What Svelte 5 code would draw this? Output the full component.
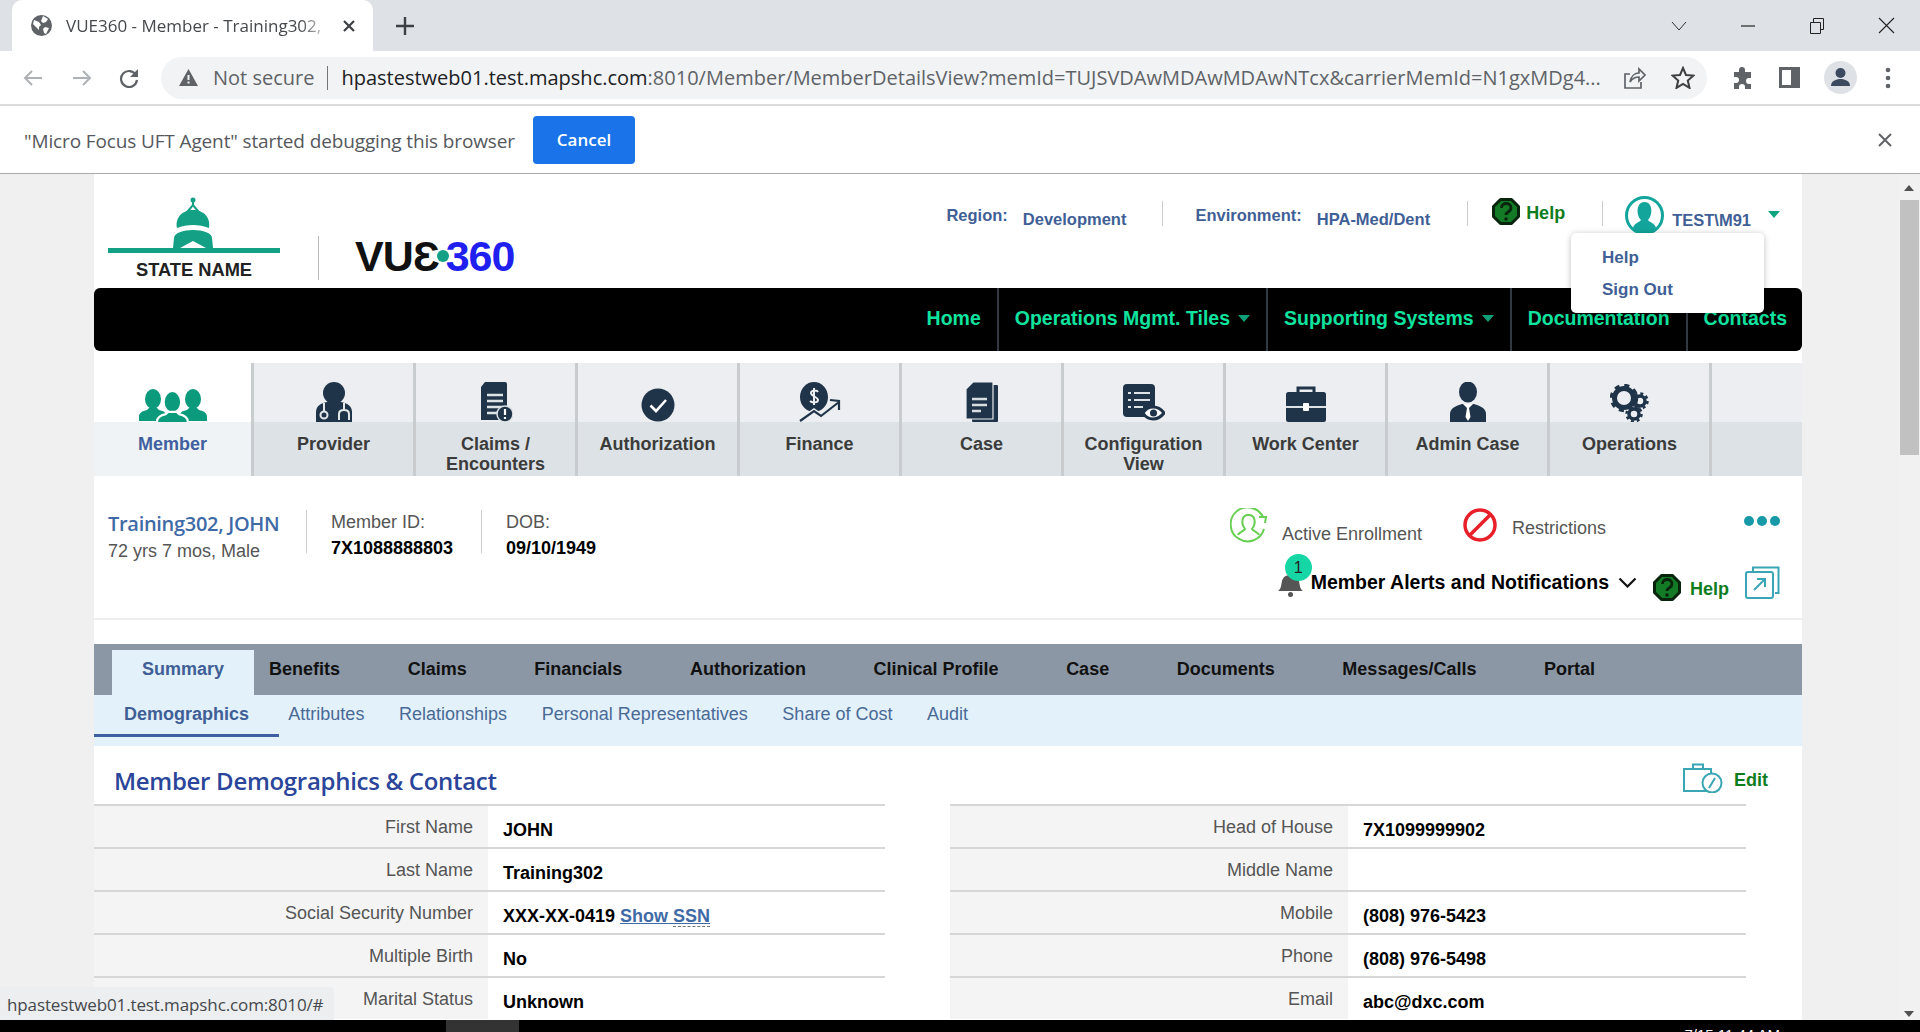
<script>
  const dark = "#1f3449";
  const bust = (x, y, s, c) =>
    `<g transform="translate(${x} ${y}) scale(${s})" fill="${c}"><ellipse cx="14" cy="10" rx="8" ry="10"/><path d="M0 32v-4c0-4 3-6 8-7l2-2h8l2 2c5 1 8 3 8 7v4z"/></g>`;

  const tiles = [
    {
      label: ["Member"],
      active: true,
      icon: `<svg width="68" height="33" viewBox="0 0 68 33">${bust(0, 0, 1, "#0b9a7c")}${bust(40, 0, 1, "#0b9a7c")}<g stroke="#fff" stroke-width="2">${bust(18, 2, 1.1, "#0b9a7c")}</g></svg>`,
    },
    {
      label: ["Provider"],
      icon: `<svg width="38" height="40" viewBox="0 0 38 40"><circle cx="19" cy="11" r="11" fill="${dark}"/><path d="M1 40V30c0-6 5-9 11-10h14c6 1 11 4 11 10v10z" fill="${dark}"/><path d="M9 21v9M29 21v7M24 38v-6c0-3 2-4 5-4s5 1 5 4v6" fill="none" stroke="#e4e8eb" stroke-width="2"/><circle cx="9" cy="33" r="3.5" fill="none" stroke="#e4e8eb" stroke-width="2"/></svg>`,
    },
    {
      label: ["Claims /", "Encounters"],
      icon: `<svg width="34" height="40" viewBox="0 0 34 40"><path d="M6 0h20a2 2 0 0 1 2 2v36H2V5z" fill="${dark}"/><path d="M8 13h16M8 19h16M8 25h16M8 31h10" stroke="#dde2e6" stroke-width="2.4"/><circle cx="26" cy="32" r="8" fill="${dark}" stroke="#dde2e6" stroke-width="1.5"/><path d="M26 27v6M26 35v2" stroke="#fff" stroke-width="2.2"/></svg>`,
    },
    {
      label: ["Authorization"],
      icon: `<svg width="34" height="34" viewBox="0 0 34 34"><circle cx="17" cy="17" r="16.5" fill="${dark}"/><path d="M9.5 17.500l5.500 5.500 10-11" fill="none" stroke="#fff" stroke-width="2.6"/></svg>`,
    },
    {
      label: ["Finance"],
      icon: `<svg width="42" height="40" viewBox="0 0 42 40"><ellipse cx="15" cy="15" rx="14" ry="15" fill="${dark}"/><path d="M19 10c-1-2-7-2-7 1s7 4 7 7-6 3-8 1M15 6v17" fill="none" stroke="#eceef1" stroke-width="2"/><path d="M1 39l14-10 7 5 18-14" fill="none" stroke="#eceef1" stroke-width="5"/><path d="M1 39l14-10 7 5 18-14M31 18l9 1v9" fill="none" stroke="${dark}" stroke-width="2.2"/></svg>`,
    },
    {
      label: ["Case"],
      icon: `<svg width="32" height="40" viewBox="0 0 32 40"><rect x="6" y="3" width="26" height="37" rx="1" fill="${dark}"/><path d="M7 0h20v37H0V7z" fill="${dark}" stroke="#eceef1" stroke-width="1.2"/><path d="M6 17h15M6 23h15M6 29h9" stroke="#d7dde1" stroke-width="2.4"/></svg>`,
    },
    {
      label: ["Configuration", "View"],
      icon: `<svg width="42" height="38" viewBox="0 0 42 38"><rect width="32" height="33" rx="4" fill="${dark}"/><path d="M5 9h3M11 9h16M5 16h3M11 16h16M5 23h3M11 23h9" stroke="#dde2e6" stroke-width="2.2"/><path d="M20 29c5-8 15-8 21 0-6 8-16 8-21 0z" fill="#fff" stroke="${dark}" stroke-width="3"/><circle cx="30.500" cy="29" r="3.500" fill="${dark}"/></svg>`,
    },
    {
      label: ["Work Center"],
      icon: `<svg width="40" height="37" viewBox="0 0 40 37"><path d="M12 8V3h16v5" fill="none" stroke="${dark}" stroke-width="3"/><rect y="7" width="40" height="30" rx="2.500" fill="${dark}"/><path d="M0 22h40" stroke="#dde2e6" stroke-width="1.800"/><rect x="17" y="18" width="6" height="8" rx="1" fill="#fff"/></svg>`,
    },
    {
      label: ["Admin Case"],
      icon: `<svg width="36" height="40" viewBox="0 0 36 40"><ellipse cx="18" cy="10" rx="9" ry="10.500" fill="${dark}"/><path d="M0 40v-8c0-6 6-8 12-10h12c6 2 12 4 12 10v8z" fill="${dark}"/><path d="M13 22h10l-5 5z" fill="#fff"/><path d="M17 26h2l1.500 9-2.500 4-2.500-4z" fill="#fff"/></svg>`,
    },
    {
      label: ["Operations"],
      icon: `<svg width="40" height="38" viewBox="0 0 40 38"><circle cx="14" cy="14" r="9.500" fill="none" stroke="${dark}" stroke-width="5"/><circle cx="14" cy="14" r="12.500" fill="none" stroke="${dark}" stroke-width="3.500" stroke-dasharray="5 4.800"/><circle cx="30" cy="17" r="5" fill="none" stroke="${dark}" stroke-width="3.500"/><circle cx="30" cy="17" r="7.500" fill="none" stroke="${dark}" stroke-width="2.500" stroke-dasharray="3 2.900"/><circle cx="24" cy="30" r="5" fill="none" stroke="${dark}" stroke-width="3.500"/><circle cx="24" cy="30" r="7.500" fill="none" stroke="${dark}" stroke-width="2.500" stroke-dasharray="3 2.900"/></svg>`,
    },
  ];

  const tabs = ["Summary", "Benefits", "Claims", "Financials", "Authorization", "Clinical Profile", "Case", "Documents", "Messages/Calls", "Portal"];
  const subtabs = ["Demographics", "Attributes", "Relationships", "Personal Representatives", "Share of Cost", "Audit"];

  const left = [
    ["First Name", "JOHN"],
    ["Last Name", "Training302"],
    ["Social Security Number", "XXX-XX-0419"],
    ["Multiple Birth", "No"],
    ["Marital Status", "Unknown"],
  ];
  const right = [
    ["Head of House", "7X1099999902"],
    ["Middle Name", ""],
    ["Mobile", "(808) 976-5423"],
    ["Phone", "(808) 976-5498"],
    ["Email", "abc@dxc.com"],
  ];
</script>

{#snippet helpIcon()}
  <svg class="help-icon" width="28" height="27" viewBox="0 0 28 27">
    <path d="M8.500 1.500h11l7 7v10l-7 7h-11l-7-7v-10z" fill="#137a26" stroke="#08240d" stroke-width="3" stroke-linejoin="round" />
    <path d="M9.500 10c0-6 9.500-6 9.500 0 0 4-5 3.500-5 7" fill="none" stroke="#08240d" stroke-width="2.800" />
    <circle cx="14" cy="21" r="1.800" fill="#08240d" />
  </svg>
{/snippet}

<div class="screen">
  <div class="tabstrip">
    <div class="tab">
      <svg width="21" height="21" viewBox="0 0 21 21">
        <circle cx="10.500" cy="10.500" r="10.500" fill="#5f6368" />
        <path d="M3 5l5 2 2 3-2 2v3l-3-3-3-3zM12 1l5 3-2 3-3 1-2-2zM14 12l4 1-3 6-2-1-1-4z" fill="#fff" />
      </svg>
      <span class="tab-title">VUE360 - Member - Training302,</span>
      <svg class="tab-close" width="14" height="14" viewBox="0 0 14 14"><path d="M2 2l10 10M12 2L2 12" stroke="#3c4043" stroke-width="2.200" /></svg>
    </div>
    <svg class="new-tab" width="18" height="18" viewBox="0 0 18 18"><path d="M9 0v18M0 9h18" stroke="#3c4043" stroke-width="2.400" /></svg>
    <div class="win-controls">
      <svg width="16" height="10" viewBox="0 0 16 10"><path d="M1 1l7 8 7-8" fill="none" stroke="#333" /></svg>
      <svg width="16" height="10" viewBox="0 0 16 10"><path d="M1 5h14" stroke="#222" stroke-width="1.200" /></svg>
      <svg width="16" height="16" viewBox="0 0 16 16"><path d="M1.500 4.500h10v11h-10zM4.500 4.500v-4h10v11h-3" fill="none" stroke="#222" /></svg>
      <svg width="17" height="17" viewBox="0 0 17 17"><path d="M1 1l15 15M16 1L1 16" stroke="#222" stroke-width="1.100" /></svg>
    </div>
  </div>

  <div class="toolbar">
    <svg class="nav-arrow" width="20" height="18" viewBox="0 0 20 18"><path d="M19 9H2M9 2L2 9l7 7" fill="none" stroke="#aeb1b5" stroke-width="2" /></svg>
    <svg class="nav-arrow" width="20" height="18" viewBox="0 0 20 18"><path d="M1 9h17M11 2l7 7-7 7" fill="none" stroke="#aeb1b5" stroke-width="2" /></svg>
    <svg class="nav-arrow reload" width="20" height="20" viewBox="0 0 20 20"><path d="M17 7a8 8 0 1 0 1 5" fill="none" stroke="#5f6368" stroke-width="2.200" /><path d="M19 1v8h-8z" fill="#5f6368" /></svg>
    <div class="omnibox">
      <svg width="19" height="17" viewBox="0 0 19 17"><path d="M9.500 0L19 17H0z" fill="#5f6368" /><path d="M9.500 6v5M9.500 12.500v2" stroke="#f1f3f4" stroke-width="2" /></svg>
      <span class="not-secure">Not secure</span>
      <span class="omni-sep"></span>
      <span class="url"><b>hpastestweb01.test.mapshc.com</b>:8010/Member/MemberDetailsView?memId=TUJSVDAwMDAwMDAwNTcx&amp;carrierMemId=N1gxMDg4...</span>
      <svg class="omni-icon" width="23" height="22" viewBox="0 0 23 22"><path d="M7 7H2v14h16v-6M7 15c1-6 5-9 9-9V2l6 6-6 6v-4c-4 0-7 2-9 5z" fill="none" stroke="#5f6368" stroke-width="1.700" /></svg>
      <svg class="omni-icon star" width="24" height="23" viewBox="0 0 24 23"><path d="M12 2l3 7 7.500.6-5.700 5 1.700 7.300L12 18l-6.500 3.900 1.700-7.300-5.700-5L9 9z" fill="none" stroke="#3c4043" stroke-width="2" /></svg>
    </div>
    <div class="actions">
      <svg width="23" height="23" viewBox="0 0 23 23"><path d="M2 6h5V4a3 3 0 0 1 6 0v2h6v6h-2a3 3 0 0 0 0 6h2v5h-6v-2a3 3 0 0 0-6 0v2H2v-6h2a3 3 0 0 0 0-6H2z" fill="#5f6368" /></svg>
      <svg width="21" height="21" viewBox="0 0 21 21"><rect x="1.500" y="1.500" width="18" height="18" fill="none" stroke="#5f6368" stroke-width="3" /><rect x="12" y="2" width="8" height="17" fill="#5f6368" /></svg>
      <svg width="33" height="33" viewBox="0 0 33 33"><circle cx="16.500" cy="16.500" r="16.500" fill="#dee1e6" /><circle cx="16.500" cy="12" r="5" fill="#3c4a60" /><path d="M7 25c0-5 5-7 9.500-7s9.500 2 9.500 7z" fill="#3c4a60" /></svg>
      <svg class="more" width="6" height="22" viewBox="0 0 6 22"><circle cx="3" cy="3" r="2.300" fill="#5f6368" /><circle cx="3" cy="11" r="2.300" fill="#5f6368" /><circle cx="3" cy="19" r="2.300" fill="#5f6368" /></svg>
    </div>
  </div>

  <div class="infobar">
    <span class="info-text">"Micro Focus UFT Agent" started debugging this browser</span>
    <button class="cancel">Cancel</button>
    <svg class="info-close" width="14" height="14" viewBox="0 0 14 14"><path d="M1 1l12 12M13 1L1 13" stroke="#5f6368" stroke-width="2" /></svg>
  </div>

  <div class="viewport">
    <div class="page">
      <div class="content">
        <header class="header">
          <div class="logo">
            <svg width="172" height="56" viewBox="0 0 172 56">
              <rect y="51" width="172" height="5" fill="#14a084" />
              <rect x="84" y="3" width="2" height="6" fill="#14a084" />
              <circle cx="85" cy="3" r="2.500" fill="#14a084" />
              <path d="M80 14l5-6 5 6z" fill="none" stroke="#14a084" stroke-width="2" />
              <path d="M69 31c-2-10 5-18 16-18s18 8 16 18c-10-4-22-4-32 0z" fill="#14a084" />
              <path d="M65 51l1-10c0-5 9-8 19-8s19 3 19 8l1 10H98l-13-7-13 7z" fill="#14a084" />
            </svg>
            <span class="state-name">STATE NAME</span>
          </div>
          <span class="logo-sep"></span>
          <div class="vue"><span>VUƐ</span><i></i><span class="vue-num">360</span></div>

          <div class="meta">
            <span class="meta-key">Region:</span>
            <span class="meta-val">Development</span>
            <span class="meta-sep first"></span>
            <span class="meta-key">Environment:</span>
            <span class="meta-val">HPA-Med/Dent</span>
            <span class="meta-sep"></span>
            <span class="help">{@render helpIcon()}<b>Help</b></span>
            <span class="meta-sep last"></span>
            <span class="user">
              <svg width="39" height="39" viewBox="0 0 39 39">
                <circle cx="19.500" cy="19.500" r="18" fill="#fff" stroke="#13a59b" stroke-width="3" />
                <path d="M8 32c1-5 7-6 8-8-5-5-5-18 3.500-18S28 19 23 24c1 2 7 3 8 8-3 4-7 5-11.500 5S11 36 8 32z" fill="#13a59b" />
              </svg>
              <span class="user-name">TEST\M91</span>
              <i class="caret user-caret"></i>
            </span>
          </div>

          <div class="user-menu">
            <a href="#help">Help</a>
            <a href="#signout">Sign Out</a>
          </div>
        </header>

        <nav class="nav">
          <a href="#home">Home</a>
          <a href="#ops">Operations Mgmt. Tiles <i class="caret"></i></a>
          <a href="#sys">Supporting Systems <i class="caret"></i></a>
          <a href="#docs">Documentation</a>
          <a href="#contacts">Contacts</a>
        </nav>

        <div class="tiles">
          {#each tiles as t}
            <div class="tile" class:active={t.active}>
              <div class="tile-icon">{@html t.icon}</div>
              <div class="tile-label">
                {#each t.label as line}<div>{line}</div>{/each}
              </div>
            </div>
          {/each}
        </div>

        <section class="patient">
          <div class="who">
            <div class="who-name">
              <a href="#member">Training302, JOHN</a>
              <span>72 yrs 7 mos, Male</span>
            </div>
            <div class="who-field"><span>Member ID:</span><b>7X1088888803</b></div>
            <div class="who-field"><span>DOB:</span><b>09/10/1949</b></div>
          </div>

          <div class="status">
            <div class="status-row">
              <svg class="enroll-icon" width="37" height="35" viewBox="0 0 37 35">
                <path d="M33 9A17 17 0 1 0 34 21" fill="none" stroke="#68cf53" stroke-width="2" />
                <path d="M29 9h7l-1 6" fill="none" stroke="#68cf53" stroke-width="2" />
                <path d="M8 27c1-3 6-4 7-6-4-5-4-14 3.500-14s7.500 9 3.500 14c1 2 6 3 7 6" fill="none" stroke="#68cf53" stroke-width="2" />
              </svg>
              <span class="enroll">Active Enrollment</span>
              <svg width="34" height="34" viewBox="0 0 34 34"><circle cx="17" cy="17" r="15" fill="none" stroke="#e8202a" stroke-width="3.500" /><path d="M7 27L27 7" stroke="#e8202a" stroke-width="3.500" /></svg>
              <span class="restrict">Restrictions</span>
              <span class="dots"><i></i><i></i><i></i></span>
            </div>
            <div class="status-row second">
              <span class="bell">
                <svg width="25" height="24" viewBox="0 0 25 24"><path d="M0 18c3-2 3-5 4-10 1-4 4-6 8.500-6S20 4 21 8c1 5 1 8 4 10z" fill="#555" /><circle cx="12.500" cy="21.500" r="2.500" fill="#555" /></svg>
                <em>1</em>
              </span>
              <b class="alerts">Member Alerts and Notifications</b>
              <svg class="chev" width="19" height="11" viewBox="0 0 19 11"><path d="M1.500 1.500l8 8 8-8" fill="none" stroke="#111" stroke-width="2.200" /></svg>
              <span class="help help-2">{@render helpIcon()}<b>Help</b></span>
              <svg class="popout" width="35" height="33" viewBox="0 0 35 33">
                <path d="M8 5V1.500h25.500V27H30" fill="none" stroke="#3aa5b5" stroke-width="2" />
                <rect x="1" y="6" width="27" height="26" rx="2" fill="#fff" stroke="#3aa5b5" stroke-width="2" />
                <path d="M9 24L20 13M12 13h8v8" fill="none" stroke="#3aa5b5" stroke-width="2" />
              </svg>
            </div>
          </div>
        </section>

        <div class="tabs">
          {#each tabs as tab, i}<span class="tab-item" class:on={i === 0}>{tab}</span>{/each}
        </div>
        <div class="subtabs">
          {#each subtabs as tab, i}<span class="sub-item" class:on={i === 0}>{tab}</span>{/each}
        </div>

        <div class="section-head">
          <h2>Member Demographics &amp; Contact</h2>
          <span class="edit">
            <svg width="40" height="30" viewBox="0 0 40 30">
              <path d="M10 6V1.500h10V6M26 28H1V6h27v6" fill="none" stroke="#3aa5b5" stroke-width="2" />
              <circle cx="29" cy="20" r="9.500" fill="#fff" stroke="#3aa5b5" stroke-width="2" />
              <path d="M26 25l6-10" stroke="#3aa5b5" stroke-width="2" />
            </svg>
            <b>Edit</b>
          </span>
        </div>

        <div class="columns">
          <div class="col col-left">
            {#each left as [k, v]}
              <div class="row">
                <span class="k">{k}</span>
                <span class="v">{v}{#if k.startsWith("Social")}&nbsp;<a href="#ssn">Show <u>SSN</u></a>{/if}</span>
              </div>
            {/each}
          </div>
          <div class="col col-right">
            {#each right as [k, v]}
              <div class="row">
                <span class="k">{k}</span>
                <span class="v">{v}</span>
              </div>
            {/each}
          </div>
        </div>
      </div>
    </div>

    <div class="scrollbar">
      <i class="arrow up"></i>
      <div class="thumb"></div>
      <i class="arrow down"></i>
    </div>
  </div>

  <div class="taskbar">
    <span class="task-active"></span>
    <span class="clock">7/15 11:44 AM</span>
  </div>

  <div class="status-bubble">hpastestweb01.test.mapshc.com:8010/#</div>
</div>

<style>
  :global(body) {
    margin: 0;
    font-family: "Liberation Sans", Arial, sans-serif;
  }
  .screen {
    position: relative;
    display: flex;
    flex-direction: column;
    height: 1032px;
    overflow: hidden;
    background: #f0f0f1;
  }
  a {
    text-decoration: none;
    color: inherit;
  }

  /* browser chrome */
  .tabstrip {
    display: flex;
    align-items: center;
    flex: 0 0 51px;
    background: #dee1e6;
    font-family: "Open Sans", sans-serif;
  }
  .tab {
    display: flex;
    align-items: center;
    align-self: stretch;
    box-sizing: border-box;
    width: 361px;
    margin-left: 12px;
    padding: 0 17px 0 19px;
    background: #fff;
    border-radius: 10px 10px 0 0;
  }
  .tab-title {
    flex: 1;
    margin-left: 14px;
    overflow: hidden;
    white-space: nowrap;
    font-size: 17px;
    color: #45484c;
    mask-image: linear-gradient(90deg, #000 88%, transparent);
  }
  .tab-close {
    margin-left: 10px;
  }
  .new-tab {
    margin-left: 23px;
  }
  .win-controls {
    display: flex;
    align-items: center;
    gap: 53px;
    margin-left: auto;
    margin-right: 25px;
  }
  .toolbar {
    display: flex;
    align-items: center;
    flex: 0 0 53px;
    background: #fff;
    border-bottom: 2px solid #dcdcdc;
    font-family: "Open Sans", sans-serif;
  }
  .nav-arrow {
    margin-left: 29px;
    flex: none;
  }
  .nav-arrow:first-child {
    margin-left: 23px;
  }
  .nav-arrow.reload {
    margin-left: 27px;
  }
  .omnibox {
    display: flex;
    align-items: center;
    box-sizing: border-box;
    width: 1546px;
    height: 42px;
    margin-left: 22px;
    padding: 0 12px 0 18px;
    border-radius: 21px;
    background: #f1f3f4;
  }
  .not-secure {
    margin-left: 15px;
    font-size: 20px;
    color: #5f6368;
    white-space: nowrap;
  }
  .omni-sep {
    width: 1px;
    height: 24px;
    margin: 0 13px;
    background: #70757a;
  }
  .url {
    flex: 1;
    font-size: 20px;
    color: #5f6368;
    white-space: nowrap;
    overflow: hidden;
  }
  .url b {
    font-weight: 400;
    color: #202124;
  }
  .omni-icon {
    margin-left: 19px;
    flex: none;
  }
  .star {
    margin-left: 25px;
  }
  .actions {
    display: flex;
    align-items: center;
    gap: 24px;
    margin-left: 25px;
  }
  .more {
    margin-left: 4px;
  }
  .infobar {
    display: flex;
    align-items: center;
    flex: 0 0 67px;
    padding-left: 24px;
    background: #fff;
    border-bottom: 1px solid #a9a9a9;
    font-family: "Open Sans", sans-serif;
  }
  .info-text {
    width: 509px;
    padding-top: 2px;
    font-size: 19px;
    color: #55585c;
    letter-spacing: -0.13px;
    white-space: nowrap;
  }
  .cancel {
    width: 102px;
    height: 48px;
    border: 0;
    border-radius: 4px;
    background: #1a73e8;
    color: #fff;
    font: 600 17px "Open Sans", sans-serif;
  }
  .info-close {
    margin-left: auto;
    margin-right: 28px;
  }

  /* page */
  .viewport {
    display: flex;
    flex: 1;
    min-height: 0;
  }
  .page {
    flex: 1;
    padding-left: 94px;
    overflow: hidden;
  }
  .content {
    width: 1708px;
    height: 100%;
    background: #fff;
  }
  .scrollbar {
    position: relative;
    width: 22px;
    background: #f1f1f1;
  }
  .thumb {
    position: absolute;
    top: 26px;
    left: 2px;
    right: 1px;
    height: 255px;
    background: #c1c1c1;
  }
  .arrow {
    position: absolute;
    left: 6px;
    border-left: 5px solid transparent;
    border-right: 5px solid transparent;
  }
  .arrow.up {
    top: 11px;
    border-bottom: 6px solid #505050;
  }
  .arrow.down {
    bottom: 3px;
    border-top: 6px solid #505050;
  }

  .header {
    position: relative;
    display: flex;
    height: 114px;
  }
  .logo {
    display: flex;
    flex-direction: column;
    align-items: center;
    width: 172px;
    margin: 23px 0 0 14px;
  }
  .state-name {
    margin-top: 7px;
    font-size: 18.300px;
    font-weight: 700;
    line-height: 19px;
    color: #222;
    white-space: nowrap;
  }
  .logo-sep {
    width: 1px;
    height: 44px;
    margin: 62px 0 0 38px;
    background: #bbb;
  }
  .vue {
    display: flex;
    align-items: center;
    height: 46px;
    margin: 59px 0 0 36px;
    font: 700 43px/46px "Liberation Sans", sans-serif;
    color: #111;
    letter-spacing: -1px;
  }
  .vue i {
    width: 12px;
    height: 12px;
    margin: 0 -3px 0 -2px;
    border-radius: 50%;
    background: #14a084;
  }
  .vue-num {
    color: #1f1ff0;
  }
  .meta {
    display: flex;
    align-items: flex-start;
    margin-left: auto;
    padding-top: 21px;
    padding-right: 22px;
    font-size: 16.500px;
    font-weight: 700;
    color: #3f5f96;
  }
  .meta-key {
    margin-top: 11px;
  }
  .meta-val {
    margin: 15px 0 0 15px;
  }
  .meta-sep {
    width: 1px;
    height: 25px;
    margin: 6px 24px 0 37px;
    background: #ccc;
  }
  .meta-sep.first {
    margin-left: 36px;
    margin-right: 32px;
  }
  .meta-sep.last {
    margin-right: 22px;
  }
  .help {
    display: inline-flex;
    align-items: center;
    gap: 6px;
    margin-top: 3px;
    color: #0f7d1e;
  }
  .help b {
    margin-top: 3px;
    font-size: 18px;
  }
  .user {
    display: inline-flex;
    align-items: flex-start;
    margin-top: 1px;
  }
  .user-name {
    margin: 15px 0 0 8px;
  }
  .caret {
    display: inline-block;
    width: 0;
    height: 0;
    border-left: 6px solid transparent;
    border-right: 6px solid transparent;
    border-top: 7px solid #0fa47f;
    vertical-align: middle;
  }
  .user-caret {
    margin: 15px 0 0 17px;
  }
  .user-menu {
    position: absolute;
    top: 59px;
    left: 1477px;
    z-index: 5;
    box-sizing: border-box;
    display: flex;
    flex-direction: column;
    gap: 13px;
    width: 193px;
    height: 80px;
    padding: 15px 0 0 31px;
    background: #fff;
    border-radius: 5px;
    box-shadow: 0 1px 6px rgba(0, 0, 0, 0.25);
    font-size: 17px;
    font-weight: 700;
    line-height: 19px;
    color: #3f5f96;
  }

  .nav {
    display: flex;
    justify-content: flex-end;
    height: 63px;
    padding-right: 15px;
    background: #000;
    border-radius: 6px;
    font-size: 19.500px;
    font-weight: 700;
    color: #0fe39f;
    white-space: nowrap;
  }
  .nav a {
    display: flex;
    align-items: center;
    gap: 8px;
    padding: 0 16px 2px;
    border-left: 2px solid #333943;
  }
  .nav a:first-child {
    border-left: 0;
  }
  .nav a:last-child {
    padding-right: 0;
  }
  .nav .caret {
    border-top-color: #0e9f78;
  }

  .tiles {
    display: flex;
    height: 113px;
    margin-top: 12px;
    background: linear-gradient(#eceef1 59px, #dce2e5 59px);
  }
  .tile {
    box-sizing: border-box;
    width: 162px;
    border-right: 3px solid #c9cccf;
    text-align: center;
    font-size: 18px;
    font-weight: 700;
    line-height: 20px;
    color: #3b3b3b;
  }
  .tile.active {
    width: 160px;
    background: linear-gradient(#fff 59px, #f0f3f5 59px);
    color: #3f5fa0;
  }
  .tile-icon {
    display: flex;
    align-items: flex-end;
    justify-content: center;
    height: 59px;
  }
  .tile-label {
    padding-top: 12px;
  }

  .patient {
    display: flex;
    justify-content: space-between;
    box-sizing: border-box;
    height: 144px;
    padding: 34px 22px 0 14px;
    border-bottom: 2px solid #eee;
  }
  .who {
    display: flex;
    align-items: flex-start;
  }
  .who-name {
    display: flex;
    flex-direction: column;
    box-sizing: border-box;
    width: 199px;
    height: 43px;
    border-right: 1px solid #ccc;
    font-size: 18px;
    color: #555;
  }
  .who-name a {
    font: 600 20px/27px "Open Sans", sans-serif;
    color: #3f6aa6;
    letter-spacing: -0.3px;
  }
  .who-name span {
    margin-top: 4px;
  }
  .who-field {
    display: flex;
    flex-direction: column;
    gap: 6px;
    box-sizing: border-box;
    width: 175px;
    height: 43px;
    padding: 2px 0 0 24px;
    border-right: 1px solid #ccc;
    font-size: 18px;
    line-height: 20px;
    color: #555;
  }
  .who-field:last-child {
    border-right: 0;
  }
  .who-field b {
    color: #000;
  }
  .status {
    display: flex;
    flex-direction: column;
    align-items: flex-end;
  }
  .status-row {
    display: flex;
    align-items: flex-start;
    margin-top: -2px;
    font-size: 18px;
    color: #555;
  }
  .enroll {
    margin: 16px 41px 0 15px;
  }
  .restrict {
    margin: 10px 138px 0 15px;
  }
  .dots {
    display: flex;
    gap: 3px;
    margin-top: 8px;
  }
  .dots i {
    width: 10px;
    height: 10px;
    border-radius: 50%;
    background: #1899a8;
  }
  .second {
    align-items: center;
    margin-top: 19px;
  }
  .bell {
    position: relative;
    display: flex;
    margin-right: 8px;
    margin-top: 5px;
  }
  .bell em {
    position: absolute;
    top: -19px;
    left: 7px;
    width: 27px;
    height: 27px;
    border-radius: 50%;
    background: #17d6a5;
    color: #222;
    font-style: normal;
    font-size: 16px;
    line-height: 27px;
    text-align: center;
  }
  .alerts {
    font-size: 19.500px;
    color: #000;
    white-space: nowrap;
  }
  .chev {
    margin: 0 16px 0 9px;
  }
  .help-2 {
    gap: 9px;
    margin: 10px 16px 0 0;
  }
  .help-2 b {
    margin-top: 4px;
  }
  .popout {
    margin-top: -1px;
  }

  .tabs {
    display: flex;
    align-items: flex-end;
    height: 51px;
    margin-top: 24px;
    padding-left: 18px;
    background: #8c97a5;
    font-size: 18px;
    font-weight: 700;
    color: #111;
  }
  .tab-item {
    display: flex;
    align-items: center;
    height: 45px;
    padding: 0 33.800px 6px;
    box-sizing: border-box;
    white-space: nowrap;
  }
  .tab-item:first-child {
    padding: 0 30px 6px;
  }
  .tab-item:nth-child(2) {
    padding-left: 15px;
  }
  .tab-item.on {
    background: #e3f1fb;
    color: #3f5f96;
  }
  .subtabs {
    display: flex;
    height: 51px;
    background: #e3f1fb;
    font-size: 18px;
    color: #4a6a96;
  }
  .sub-item {
    box-sizing: border-box;
    height: 42px;
    padding: 9px 17.300px 0;
    white-space: nowrap;
  }
  .sub-item.on {
    margin-right: -8px;
    padding: 9px 30px 0;
    border-bottom: 3px solid #3f5fa0;
    font-weight: 700;
    color: #3f5f96;
  }

  .section-head {
    display: flex;
    justify-content: space-between;
    align-items: center;
    height: 58px;
    padding: 0 34px 0 20px;
  }
  h2 {
    margin: 10px 0 0;
    font: 600 24px "Open Sans", sans-serif;
    color: #2a459a;
    letter-spacing: -0.3px;
  }
  .edit {
    display: flex;
    align-items: center;
    gap: 11px;
    margin-top: 6px;
    font-size: 18px;
    color: #0f7d1e;
  }
  .edit b {
    margin-top: 4px;
  }
  .columns {
    display: flex;
    gap: 65px;
  }
  .col-left {
    width: 791px;
    --label: 394px;
  }
  .col-right {
    width: 796px;
    --label: 398px;
  }
  .row {
    display: flex;
    box-sizing: border-box;
    height: 43px;
    border-top: 2px solid #d6d6d6;
    font-size: 18px;
  }
  .k {
    box-sizing: border-box;
    width: var(--label);
    padding: 11px 15px 0 0;
    background: #f4f4f4;
    color: #555;
    text-align: right;
  }
  .v {
    padding: 14px 0 0 15px;
    font-weight: 700;
    color: #000;
  }
  .v a {
    color: #3f6aa6;
    text-decoration: underline;
  }
  .v u {
    text-decoration: underline dashed 1px #777;
    text-underline-offset: 4px;
  }

  .taskbar {
    position: relative;
    display: flex;
    flex: 0 0 12px;
    background: #000;
    overflow: hidden;
  }
  .task-active {
    width: 73px;
    margin-left: 446px;
    background: #333;
  }
  .clock {
    margin-left: auto;
    margin-right: 140px;
    padding-top: 7px;
    font-size: 15px;
    line-height: 15px;
    color: #fff;
    white-space: nowrap;
  }
  .status-bubble {
    position: absolute;
    left: 0;
    bottom: 12px;
    box-sizing: border-box;
    width: 334px;
    height: 33px;
    padding: 6px 0 0 7px;
    background: #eceef0;
    border-radius: 0 4px 0 0;
    font: 17px "Open Sans", sans-serif;
    color: #45484c;
    letter-spacing: -0.12px;
    white-space: nowrap;
  }
</style>
